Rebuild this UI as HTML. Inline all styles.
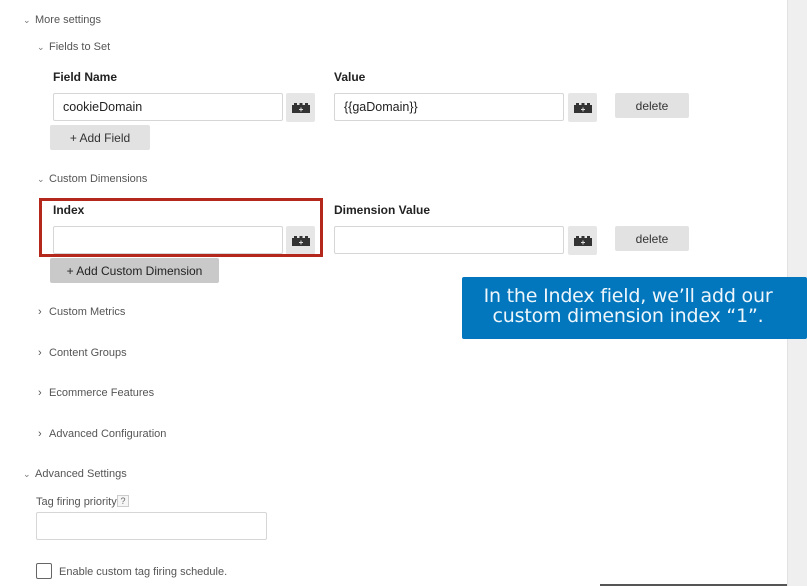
<!DOCTYPE html>
<html><head><meta charset="utf-8"><style>
*{margin:0;padding:0;box-sizing:border-box}
body{width:807px;height:586px;position:relative;background:#fff;font-family:"Liberation Sans",Arial,sans-serif;overflow:hidden}
.a{position:absolute}
.sec{font-size:11px;color:#555;line-height:14px}
.lbl{font-size:12px;font-weight:bold;color:#222;line-height:14px}
.inp{border:1px solid #d6d6d6;border-radius:2px;background:#fff;font-size:12.5px;color:#222;padding-left:9px;display:flex;align-items:center}
.ib{background:#e6e6e6;border-radius:2px;display:flex;align-items:center;justify-content:center}
.btn{background:#e2e2e2;border-radius:2px;font-size:12px;color:#333;display:flex;align-items:center;justify-content:center}
.ch{font-size:9px;color:#777;line-height:14px}
</style></head><body>
<div class="a" style="left:787px;top:0;width:20px;height:586px;background:#efefef;border-left:1px solid #e2e2e2"></div>
<div class="a" style="left:600px;top:584px;width:187px;height:2px;background:#555"></div>

<div class="a ch" style="left:23px;top:13px">&#8964;</div>
<div class="a sec" style="left:35px;top:13px">More settings</div>
<div class="a ch" style="left:37px;top:40px">&#8964;</div>
<div class="a sec" style="left:49px;top:40px">Fields to Set</div>

<div class="a lbl" style="left:53px;top:70px">Field Name</div>
<div class="a lbl" style="left:334px;top:70px">Value</div>
<div class="a inp" style="left:53px;top:93px;width:230px;height:28px">cookieDomain</div>
<div class="a ib" style="left:286px;top:93px;width:29px;height:29px"><svg width="18" height="10" viewBox="0 0 18 10"><rect x="0" y="2" width="18" height="8" fill="#333"/><rect x="2" y="0" width="3" height="3" fill="#333"/><rect x="7.5" y="0" width="3" height="3" fill="#333"/><rect x="13" y="0" width="3" height="3" fill="#333"/><path d="M9 4.5v4M7 6.5h4" stroke="#ddd" stroke-width="1"/></svg></div>
<div class="a inp" style="left:334px;top:93px;width:230px;height:28px">{{gaDomain}}</div>
<div class="a ib" style="left:568px;top:93px;width:29px;height:29px"><svg width="18" height="10" viewBox="0 0 18 10"><rect x="0" y="2" width="18" height="8" fill="#333"/><rect x="2" y="0" width="3" height="3" fill="#333"/><rect x="7.5" y="0" width="3" height="3" fill="#333"/><rect x="13" y="0" width="3" height="3" fill="#333"/><path d="M9 4.5v4M7 6.5h4" stroke="#ddd" stroke-width="1"/></svg></div>
<div class="a btn" style="left:615px;top:93px;width:74px;height:25px">delete</div>
<div class="a btn" style="left:50px;top:125px;width:100px;height:25px">+ Add Field</div>

<div class="a ch" style="left:37px;top:172px">&#8964;</div>
<div class="a sec" style="left:49px;top:172px">Custom Dimensions</div>
<div class="a lbl" style="left:53px;top:203px">Index</div>
<div class="a lbl" style="left:334px;top:203px">Dimension Value</div>
<div class="a inp" style="left:53px;top:226px;width:230px;height:28px"></div>
<div class="a ib" style="left:286px;top:226px;width:29px;height:29px"><svg width="18" height="10" viewBox="0 0 18 10"><rect x="0" y="2" width="18" height="8" fill="#333"/><rect x="2" y="0" width="3" height="3" fill="#333"/><rect x="7.5" y="0" width="3" height="3" fill="#333"/><rect x="13" y="0" width="3" height="3" fill="#333"/><path d="M9 4.5v4M7 6.5h4" stroke="#ddd" stroke-width="1"/></svg></div>
<div class="a inp" style="left:334px;top:226px;width:230px;height:28px"></div>
<div class="a ib" style="left:568px;top:226px;width:29px;height:29px"><svg width="18" height="10" viewBox="0 0 18 10"><rect x="0" y="2" width="18" height="8" fill="#333"/><rect x="2" y="0" width="3" height="3" fill="#333"/><rect x="7.5" y="0" width="3" height="3" fill="#333"/><rect x="13" y="0" width="3" height="3" fill="#333"/><path d="M9 4.5v4M7 6.5h4" stroke="#ddd" stroke-width="1"/></svg></div>
<div class="a btn" style="left:615px;top:226px;width:74px;height:25px">delete</div>
<div class="a" style="left:39px;top:198px;width:284px;height:59px;border:3px solid #b3281a"></div>
<div class="a btn" style="left:50px;top:258px;width:169px;height:25px;background:#c9c9c9;color:#222">+ Add Custom Dimension</div>

<div class="a sec" style="left:38px;top:305px">&#8250;</div><div class="a sec" style="left:49px;top:305px">Custom Metrics</div>
<div class="a sec" style="left:38px;top:346px">&#8250;</div><div class="a sec" style="left:49px;top:346px">Content Groups</div>
<div class="a sec" style="left:38px;top:386px">&#8250;</div><div class="a sec" style="left:49px;top:386px">Ecommerce Features</div>
<div class="a sec" style="left:38px;top:427px">&#8250;</div><div class="a sec" style="left:49px;top:427px">Advanced Configuration</div>

<div class="a ch" style="left:23px;top:467px">&#8964;</div>
<div class="a sec" style="left:35px;top:467px">Advanced Settings</div>
<div class="a sec" style="left:36px;top:495px">Tag firing priority</div>
<div class="a" style="left:117px;top:495px;width:12px;height:12px;border:1px solid #ccc;font-size:9px;color:#666;text-align:center;line-height:10px;background:#f6f6f6">?</div>
<div class="a inp" style="left:36px;top:512px;width:231px;height:28px"></div>
<div class="a" style="left:36px;top:563px;width:16px;height:16px;border:1.5px solid #666;border-radius:2px"></div>
<div class="a sec" style="left:59px;top:565px">Enable custom tag firing schedule.</div>

<div class="a" style="left:462px;top:277px;width:345px;height:62px;background:#0277bd;border-radius:2px;color:#eef6fb;font-family:'DejaVu Sans',sans-serif;font-size:19px;line-height:20px;text-align:center;padding-top:9px;padding-right:13px;letter-spacing:-0.2px">In the Index field, we’ll add our<br>custom dimension index “1”.</div>
</body></html>
